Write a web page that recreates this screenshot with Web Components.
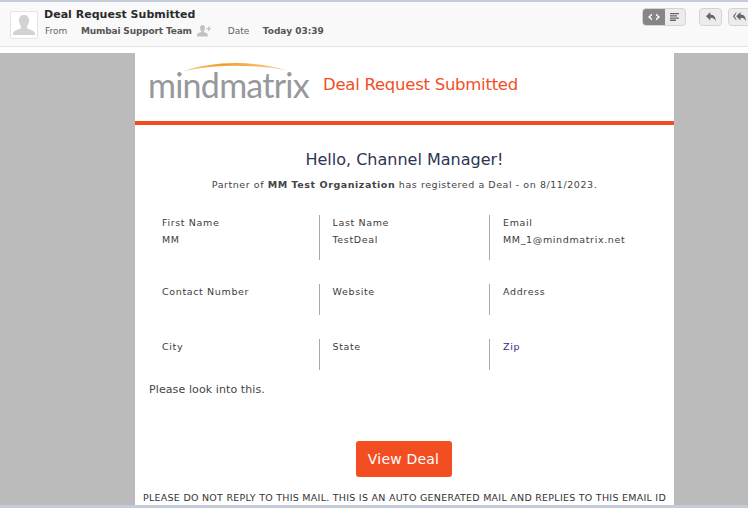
<!DOCTYPE html>
<html><head><meta charset="utf-8">
<style>
html,body{margin:0;padding:0;height:508px;overflow:hidden;background:#fff;font-family:"DejaVu Sans",sans-serif}
body{display:flex;flex-direction:column}
</style></head><body>
<mail-header></mail-header>
<mail-stage>
  <brand-banner></brand-banner>
  <deal-intro></deal-intro>
  <field-grid>
    <field-cell label="First Name" value="MM" h="45"></field-cell>
    <field-cell label="Last Name" value="TestDeal" h="45" divider></field-cell>
    <field-cell label="Email" value="MM_1@mindmatrix.net" h="45" divider></field-cell>
    <field-cell label="Contact Number" h="31"></field-cell>
    <field-cell label="Website" h="31" divider></field-cell>
    <field-cell label="Address" h="31" divider></field-cell>
    <field-cell label="City" h="31"></field-cell>
    <field-cell label="State" h="31" divider></field-cell>
    <field-cell label="Zip" h="31" divider link></field-cell>
  </field-grid>
  <deal-footer></deal-footer>
</mail-stage>
<script>
function def(name, html, init){
  customElements.define(name, class extends HTMLElement{
    constructor(){super();this.attachShadow({mode:'open'}).innerHTML=html;}
    connectedCallback(){if(init)init(this,this.shadowRoot);}
  });
}
def('mail-header',`<style>
:host{display:flex;box-sizing:border-box;height:47px;flex:none;background:#f9f9f9;border-top:2px solid #c3ccd8;border-bottom:1px solid #e2e2e2;padding:9px 0 0 10px;position:relative}
.pic{width:28px;height:28px;box-sizing:border-box;border:1px solid #e3e3e3;border-radius:2px;background:#fff;flex:none;display:block}
.info{margin-left:6px;min-width:0}
.t{font:bold 11px/14px "DejaVu Sans",sans-serif;color:#2b2b2b;margin-top:-3px;letter-spacing:.02px;white-space:nowrap}
.m{display:flex;align-items:center;height:14px;margin-top:2px;font-size:9px;color:#666;white-space:nowrap}
.m b{color:#555;font-weight:bold}
.m b.n{letter-spacing:-.16px}
.tools{position:absolute;top:6px;left:642px;display:flex}
.seg{display:flex;width:44px;height:18px;box-sizing:border-box;border:1px solid #d4d4d4;border-radius:4px;overflow:hidden;background:#ececec}
.seg span{flex:1;display:flex;align-items:center;justify-content:center}
.seg .on{background:#868686;flex:none;width:22px}
.rb{width:23px;height:18px;box-sizing:border-box;border:1px solid #d4d4d4;border-radius:4px;background:#ececec;display:flex;align-items:center;justify-content:center;flex:none}
</style>
<svg class="pic" viewBox="0 0 26 26"><path fill="#d2d2d2" d="M13 3c3.400 0 5 2.500 5 5.400 0 2.200-.8 4.400-2.100 5.800v1.600c0 1 4 2 6.200 3.200 1.200.7 1.900 1.600 1.900 3v1H2v-1c0-1.400.7-2.300 1.900-3C6.100 17.800 10.100 16.800 10.100 15.800v-1.600C8.800 12.800 8 10.600 8 8.400 8 5.500 9.600 3 13 3z"/></svg>
<div class="info"><div class="t">Deal Request Submitted</div>
<div class="m"><span style="width:36px;margin-left:1px">From</span><b class="n">Mumbai Support Team</b>
<svg width="15" height="12" viewBox="0 0 15 12" style="margin-left:5px"><path fill="#c2c2c2" d="M5.500 0C7.300 0 8 1.400 8 3c0 1.300-.5 2.500-1.200 3.100V7c1 .6 3.700 1 4 2.200V11.500H0V9.200C.3 8 3.200 7.600 4.200 7v-.9C3.500 5.500 3 4.300 3 3 3 1.400 3.700 0 5.500 0z"/><path fill="#c2c2c2" d="M11 1.500h1.300V3H14v1.300h-1.700V6H11V4.300H9.500V3H11z"/></svg>
<span style="margin-left:16px;width:35px">Date</span><b>Today 03:39</b></div></div>
<div class="tools"><div class="seg"><span class="on"><svg width="12" height="8" viewBox="0 0 12 8"><path fill="#fff" d="M4 .5v1.800L2.200 4 4 5.700v1.800L0 4zM8 .5 12 4 8 7.500V5.700L9.800 4 8 2.300z"/></svg></span><span><svg width="10" height="8" viewBox="0 0 10 8"><path fill="#666" d="M0 0h9v1.300H0zM0 2.200h7v1.300H0zM0 4.400h9v1.300H0zM0 6.600h6V8H0z"/></svg></span></div>
<div class="rb" style="margin-left:13px"><svg width="10" height="10" viewBox="0 0 10 10"><path fill="#666" d="M4.300 0v2.600C7.800 2.700 9.700 4.700 9.700 9.500 8.700 6.800 7.200 5.800 4.300 5.800v2.700L0 4.200z"/></svg></div>
<div class="rb" style="margin-left:6px"><svg width="14" height="10" viewBox="0 0 14 10"><path fill="#666" d="M3.300 0v1.300L1.500 4.200l1.800 2.900v1.400L0 4.200zM7.500 0v2.600c3.500.1 5.400 2.100 5.400 6.900-1-2.700-2.500-3.700-5.400-3.700v2.700L3.200 4.200z"/></svg></div></div>`);
def('mail-stage',`<style>
:host{display:block;box-sizing:border-box;margin-top:6px;padding-left:135px;height:452px;flex:none;background:#bbb;overflow:hidden}
.col{width:539px;background:#fff;height:452px;overflow:hidden}
</style><div class="col"><slot></slot></div>`);
def('brand-banner',`<style>
:host{display:block;height:68px;border-bottom:4px solid #f34e21;position:relative}
.word{position:absolute;left:13px;top:12px;font:400 34px/40px "Lato",sans-serif;color:#96989c;letter-spacing:-.75px;white-space:nowrap}
.h{position:absolute;left:188px;top:21px;font:16.500px/22px "DejaVu Sans",sans-serif;color:#f24e25;white-space:nowrap;letter-spacing:-.26px}
svg{position:absolute;left:48px;top:8px}
</style>
<svg width="106" height="12" viewBox="0 0 106 12"><defs><linearGradient id="g"><stop offset="0" stop-color="#fbc98a"/><stop offset=".4" stop-color="#f29a25"/><stop offset="1" stop-color="#fbd39a"/></linearGradient></defs><path fill="url(#g)" d="M0 10.500C28 0 72 -1 104 9.500 72 3 30 3 0 10.500z"/></svg>
<span class="word">mindmatrix</span>
<span class="h">Deal Request Submitted</span>`);
def('deal-intro',`<style>
:host{display:block;text-align:center;height:90px;box-sizing:border-box;padding-top:25px;color:#333}
.a{font:16px/20px "DejaVu Sans",sans-serif;color:#2c3550}
.b{font:9.500px/14px "DejaVu Sans",sans-serif;color:#444;margin-top:8px;letter-spacing:.56px}
</style><div class="a">Hello, Channel Manager!</div>
<div class="b">Partner of <b>MM Test Organization</b> has registered a Deal - on 8/11/2023.</div>`);
def('field-grid',`<style>
:host{display:grid;grid-template-columns:repeat(3,170.500px);margin-left:13px;row-gap:24px;align-items:start}
</style><slot></slot>`);
def('field-cell',`<style>
:host{display:block;box-sizing:border-box;padding-left:13px;border-left:1px solid transparent;font:9.500px/17px "DejaVu Sans",sans-serif;color:#3c3c3c;letter-spacing:.64px;white-space:nowrap}
:host([divider]){border-left-color:#aaa}
:host([link]) .l{color:#3a2a8c}
.l{margin-top:-1px}
</style><div class="l"></div><div class="v"></div>`,(el,r)=>{
  r.querySelector('.l').textContent=el.getAttribute('label');
  r.querySelector('.v').textContent=el.getAttribute('value')||'';
  el.style.height=el.getAttribute('h')+'px';
});
def('deal-footer',`<style>
:host{display:block}
.p{font:11px/16px "DejaVu Sans",sans-serif;color:#444;margin:12px 0 0 14px;letter-spacing:.1px}
.w{display:flex;justify-content:center;margin-top:43px;padding-right:2px}
.btn{box-sizing:border-box;width:96px;height:36px;background:#f34e21;color:#fff;border-radius:3px;font:14px/36px "DejaVu Sans",sans-serif;text-align:center;letter-spacing:.2px}
.n{font:9.500px/14px "DejaVu Sans",sans-serif;color:#333;text-align:center;margin-top:14px;white-space:nowrap;letter-spacing:.26px}
</style><div class="p">Please look into this.</div><div class="w"><div class="btn">View Deal</div></div>
<div class="n">PLEASE DO NOT REPLY TO THIS MAIL. THIS IS AN AUTO GENERATED MAIL AND REPLIES TO THIS EMAIL ID</div>`);
</script>
<div style="height:3px;background:#c3ccd8;flex:none"></div>
</body></html>
